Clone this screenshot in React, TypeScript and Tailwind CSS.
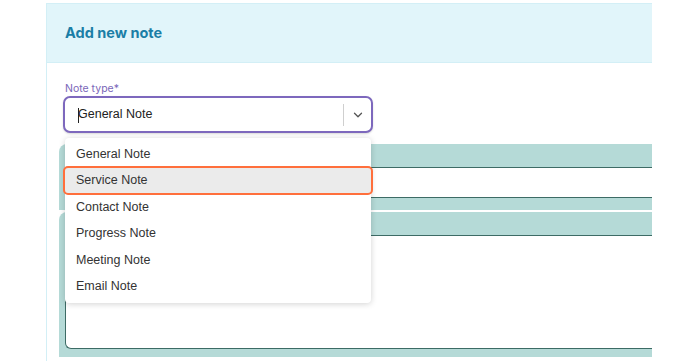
import { ChevronDown } from "lucide-react";

const options = [
  "General Note",
  "Service Note",
  "Contact Note",
  "Progress Note",
  "Meeting Note",
  "Email Note",
];

export default function App() {
  return (
    <div className="h-[361px] w-[688px] overflow-hidden bg-white pl-[46px] pt-[3px] font-['Liberation_Sans',Arial,sans-serif]">
      <div className="relative h-[358px] w-[606px] border-l border-t border-[#d3eff6]">
        <div className="flex h-[59px] items-center border-b border-[#d3eff6] bg-[#e1f5fa] pl-[18px]">
          <h1 className="font-['Inter',sans-serif] text-[14.5px] font-bold text-[#1a7ea6]">
            Add new note
          </h1>
        </div>

        <div className="pt-[19px]">
          <label className="ml-[18px] block font-['Inter',sans-serif] text-[10.5px] leading-[13px] text-[#7a66b8]">
            Note type*
          </label>
          <div className="relative ml-[16px] mt-[1px] flex h-[37px] w-[310px] items-center rounded-[7px] border-2 border-[#7d68bd] bg-white shadow-[0_1px_2px_rgba(0,0,0,0.15)]">
            <span className="absolute left-[13px] top-[10px] h-[15px] w-px bg-[#222]" />
            <span className="flex-1 pl-[13px] text-[12.5px] text-[#222]">
              General Note
            </span>
            <span className="h-[22px] w-px bg-[#cfcfcf]" />
            <span className="flex w-[27px] justify-center text-[#555]">
              <ChevronDown size={14} strokeWidth={2.2} />
            </span>
          </div>

          <div className="ml-[12px] mt-[11px] rounded-tl-[8px] bg-[#b5dad7] pb-[12px] pl-[6px] pt-[23px]">
            <div className="h-[31px] rounded-l-[4px] border-y border-l border-[#3d6b65] bg-white" />
          </div>
          <div className="ml-[12px] mt-[2px] rounded-tl-[8px] bg-[#b5dad7] pb-[8px] pl-[6px] pt-[23px]">
            <div className="h-[114px] rounded-bl-[6px] border-y border-l border-[#3d6b65] bg-white" />
          </div>
        </div>

        <ul className="absolute left-[18px] top-[134px] w-[306px] rounded-[4px] bg-white py-[3px] text-[12.5px] text-[#333] shadow-[0_1px_6px_rgba(0,0,0,0.18)]">
          {options.map((o) => (
            <li
              key={o}
              className={
                o === "Service Note"
                  ? "relative flex h-[26.5px] items-center bg-[#ebebeb] pl-[11px]"
                  : "flex h-[26.5px] items-center pl-[11px]"
              }
            >
              {o === "Service Note" && (
                <span className="absolute -inset-x-[2px] -bottom-[1px] -top-[2px] rounded-[5px] border-2 border-[#ff6f3c]" />
              )}
              <span className="relative">{o}</span>
            </li>
          ))}
        </ul>
      </div>
    </div>
  );
}
